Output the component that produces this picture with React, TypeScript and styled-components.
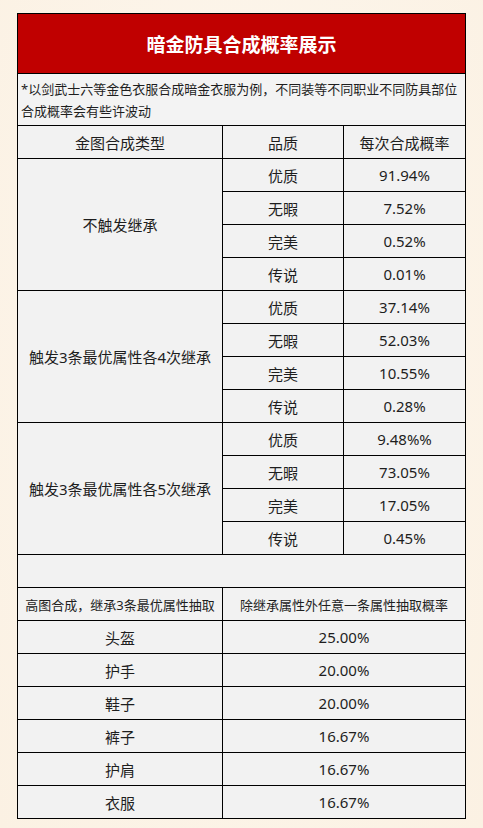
import React from "react";
import styled, { createGlobalStyle } from "styled-components";

const Global = createGlobalStyle`
  html, body { margin: 0; padding: 0; }
  body {
    background: #fcf4e8;
    font-family: "Noto Sans", "Noto Sans CJK SC", sans-serif;
  }
`;

const Page = styled.div`
  min-height: 828px;
  box-sizing: border-box;
  padding: 13px 0 0 17px;
  background: radial-gradient(ellipse at 50% 40%, #fdf7ee 0%, #fbf1e3 100%);
`;

const Table = styled.table`
  width: 448px;
  border-collapse: collapse;
  table-layout: fixed;
  color: #1e1e1e;
  font-size: 15px;
`;

const Row = styled.tr<{ $h?: number }>`
  height: ${(p) => p.$h ?? 33}px;
`;

const TitleCell = styled.td`
  background: #c00000;
  color: #fff;
  font-weight: 700;
  font-size: 19px;
  text-align: center;
  border: 1px solid #000;
  padding: 0;
`;

const NoteCell = styled.td`
  background: #f3f3f3;
  border: 1px solid #000;
  font-size: 13px;
  line-height: 22px;
  padding: 3px 2px 3px 3px;
  text-align: left;
`;

const Cell = styled.td`
  background: #f2f2f2;
  border: 1px solid #000;
  text-align: center;
  vertical-align: middle;
  padding: 0;
  white-space: nowrap;
`;

const SmallCell = styled(Cell)`
  font-size: 13px;
`;

type Group = { name: string; rows: [string, string][] };

const groups: Group[] = [
  {
    name: "不触发继承",
    rows: [
      ["优质", "91.94%"],
      ["无暇", "7.52%"],
      ["完美", "0.52%"],
      ["传说", "0.01%"],
    ],
  },
  {
    name: "触发3条最优属性各4次继承",
    rows: [
      ["优质", "37.14%"],
      ["无暇", "52.03%"],
      ["完美", "10.55%"],
      ["传说", "0.28%"],
    ],
  },
  {
    name: "触发3条最优属性各5次继承",
    rows: [
      ["优质", "9.48%%"],
      ["无暇", "73.05%"],
      ["完美", "17.05%"],
      ["传说", "0.45%"],
    ],
  },
];

const parts: [string, string][] = [
  ["头盔", "25.00%"],
  ["护手", "20.00%"],
  ["鞋子", "20.00%"],
  ["裤子", "16.67%"],
  ["护肩", "16.67%"],
  ["衣服", "16.67%"],
];

export default function App() {
  return (
    <Page>
      <Global />
      <Table>
        <colgroup>
          <col style={{ width: 205 }} />
          <col style={{ width: 121 }} />
          <col style={{ width: 122 }} />
        </colgroup>
        <tbody>
          <Row $h={60}>
            <TitleCell colSpan={3}>暗金防具合成概率展示</TitleCell>
          </Row>
          <Row $h={52}>
            <NoteCell colSpan={3}>
              *以剑武士六等金色衣服合成暗金衣服为例，不同装等不同职业不同防具部位合成概率会有些许波动
            </NoteCell>
          </Row>
          <Row>
            <Cell>金图合成类型</Cell>
            <Cell>品质</Cell>
            <Cell>每次合成概率</Cell>
          </Row>
          {groups.map((g) =>
            g.rows.map((r, i) => (
              <Row key={g.name + i}>
                {i === 0 && <Cell rowSpan={4}>{g.name}</Cell>}
                <Cell>{r[0]}</Cell>
                <Cell>{r[1]}</Cell>
              </Row>
            ))
          )}
          <Row>
            <Cell colSpan={3}></Cell>
          </Row>
          <Row>
            <SmallCell>高图合成，继承3条最优属性抽取</SmallCell>
            <SmallCell colSpan={2}>除继承属性外任意一条属性抽取概率</SmallCell>
          </Row>
          {parts.map((p) => (
            <Row key={p[0]}>
              <Cell>{p[0]}</Cell>
              <Cell colSpan={2}>{p[1]}</Cell>
            </Row>
          ))}
        </tbody>
      </Table>
    </Page>
  );
}
